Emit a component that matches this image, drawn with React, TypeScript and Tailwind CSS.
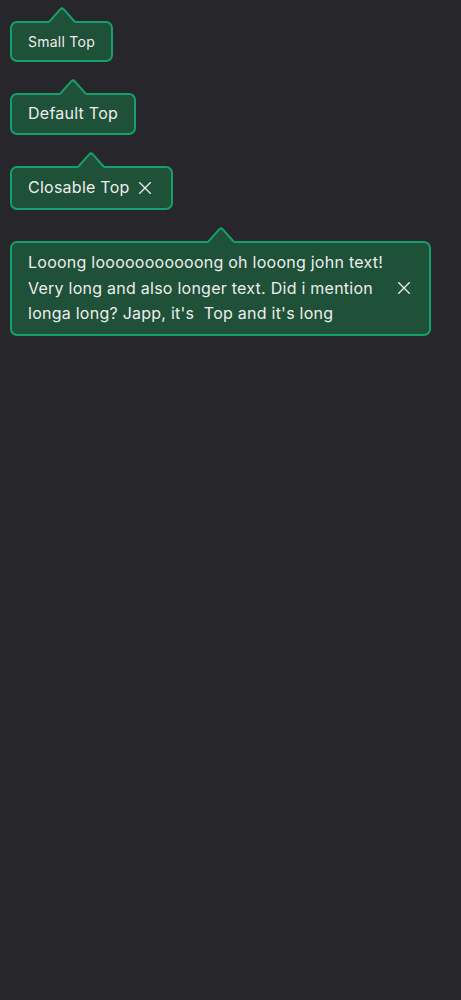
import React from "react";

type TipProps = {
  size?: "sm" | "md";
  closable?: boolean;
  long?: boolean;
  children: React.ReactNode;
};

const Arrow = () => (
  <svg width="24" height="16" viewBox="0 0 24 16" className="relative z-10 block overflow-visible">
    <path d="M-1 17 L-1 15 L10.4 2.2 Q12 0.6 13.6 2.2 L25 15 L25 17 Z" fill="#1f5038" />
    <path d="M-1 15 L10.4 2.2 Q12 0.6 13.6 2.2 L25 15" fill="none" stroke="#14a06c" strokeWidth="2" strokeLinejoin="round" />
  </svg>
);

const CloseIcon = () => (
  <svg width="12" height="12" viewBox="0 0 12 12" className="shrink-0">
    <path d="M0.5 0.5 L11.5 11.5 M11.5 0.5 L0.5 11.5" stroke="#e6ebe8" strokeWidth="1.4" strokeLinecap="round" />
  </svg>
);

const Tooltip = ({ size = "md", closable, long, children }: TipProps) => {
  let pad = "py-[6px] px-4 text-[16px]";
  if (size === "sm") pad = "py-[7.5px] px-4 text-[14px]";
  else if (long) pad = "py-[7.5px] pl-4 pr-[19px] text-[16px]";
  else if (closable) pad = "py-[7px] pl-4 pr-5 text-[16px]";

  return (
    <div className="inline-flex flex-col items-center">
      <Arrow />
      <div
        className={`-mt-[2px] flex items-center rounded-[7px] border-2 border-[#14a06c] bg-[#1f5038] text-[#eceeed] leading-[1.6] tracking-[0.25px] ${pad}`}
      >
        <span>{children}</span>
        {closable && (
          <span className={`${long ? "ml-[13px]" : "ml-[9px]"} flex items-center`}>
            <CloseIcon />
          </span>
        )}
      </div>
    </div>
  );
};

export default function App() {
  return (
    <div
      className="min-h-screen w-full bg-[#27262b] pl-[10px] pt-[7px]"
      style={{ fontFamily: 'Inter, "Open Sans", sans-serif' }}
    >
      <div className="flex flex-col items-start gap-[17px]">
        <Tooltip size="sm">Small Top</Tooltip>
        <Tooltip>Default Top</Tooltip>
        <Tooltip closable>Closable Top</Tooltip>
        <Tooltip closable long>
          <span className="block w-[357px]">
            Looong looooooooooong oh looong john text! Very long and also longer text. Did i mention longa long? Japp, it's&nbsp; Top and it's long
          </span>
        </Tooltip>
      </div>
    </div>
  );
}
